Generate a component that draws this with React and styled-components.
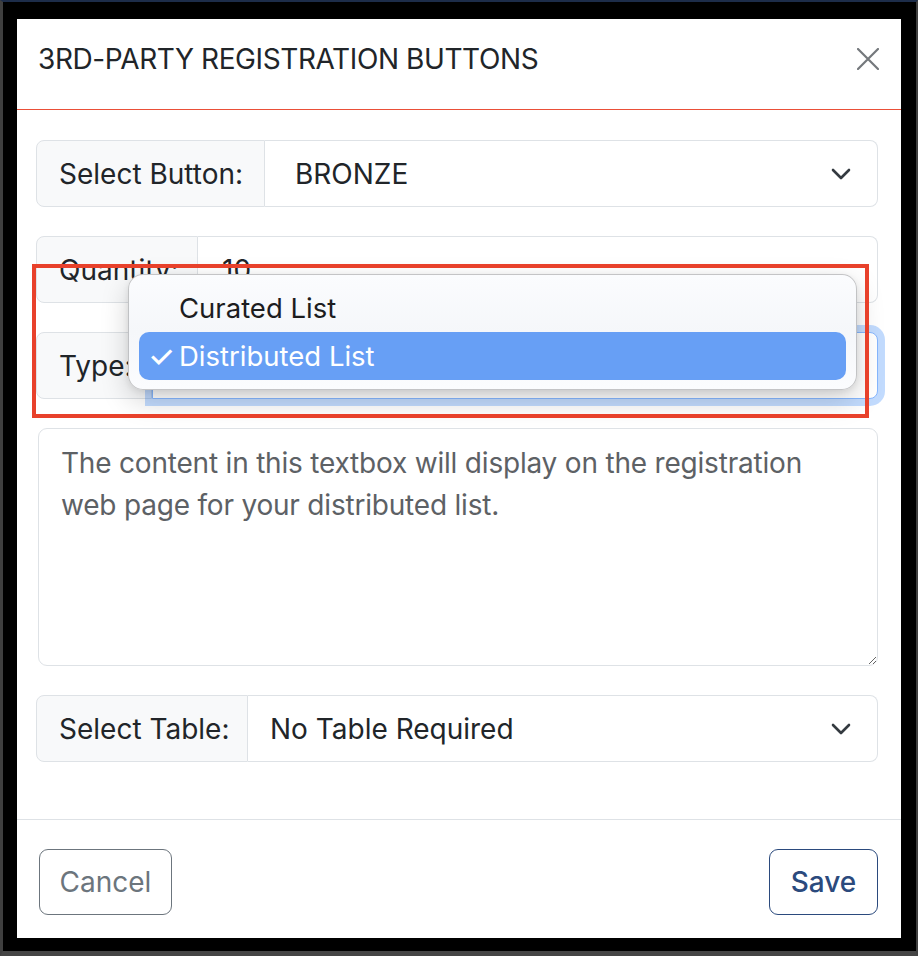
import React from "react";
import styled, { createGlobalStyle } from "styled-components";

const GlobalStyle = createGlobalStyle`
  * { box-sizing: border-box; }
  body {
    margin: 0;
    background: #000;
    font-family: Inter, "Noto Sans", "Liberation Sans", sans-serif;
  }
`;

const Frame = styled.div`
  position: relative;
  width: 918px;
  height: 956px;
  background: #000;
  border-top: 2px solid #1d2d4a;
  border-left: 3px solid #3f3f3f;
  border-right: 2px solid #3f3f3f;
  border-bottom: 5px solid #454545;
  padding: 17px 15px 13px 14px;
`;

const Modal = styled.div`
  width: 884px;
  height: 919px;
  background: #fff;
  display: flex;
  flex-direction: column;
`;

const Header = styled.div`
  display: flex;
  align-items: center;
  justify-content: space-between;
  height: 90px;
  padding: 0 22px 10px 21px;
`;

const RedRule = styled.div`
  height: 1px;
  background: #ea4f38;
`;

const Title = styled.h5`
  margin: 0;
  font-size: 28px;
  font-weight: 400;
  letter-spacing: -0.4px;
  line-height: 42px;
  color: #212529;
`;

const CloseButton = styled.button`
  border: none;
  background: none;
  padding: 0;
  width: 22px;
  height: 22px;
  display: flex;
  cursor: pointer;
`;

const Body = styled.div`
  flex: 1;
  display: flex;
  flex-direction: column;
  gap: 29px;
  padding: 30px 23px 0 19px;
`;

const Group = styled.div`
  display: flex;
  height: 67px;
  font-size: 28px;
  line-height: 42px;
  color: #212529;
`;

const Label = styled.div`
  flex: 0 0 ${(p) => p.$w}px;
  display: flex;
  align-items: center;
  padding-left: 22px;
  background: #f8f9fa;
  border: 1px solid #dee2e6;
  border-radius: 8px 0 0 8px;
  white-space: nowrap;
  overflow: hidden;
`;

const Field = styled.div`
  flex: 1;
  display: flex;
  align-items: center;
  justify-content: space-between;
  padding: 0 26px 0 ${(p) => p.$pad || 23}px;
  background: #fff;
  border: 1px solid ${(p) => (p.$focus ? "#86b7fe" : "#dee2e6")};
  border-left: ${(p) => (p.$focus ? "1px solid #86b7fe" : "none")};
  border-radius: 0 8px 8px 0;
  box-shadow: ${(p) => (p.$focus ? "0 0 0 7px rgba(13, 110, 253, 0.25)" : "none")};
  color: ${(p) => (p.$focus ? "#b8bcc2" : "#212529")};
`;

const TextArea = styled.textarea`
  height: 238px;
  margin-left: 2px;
  padding: 13px 22px;
  border: 1px solid #dee2e6;
  border-radius: 9px;
  font-family: inherit;
  font-size: 28px;
  letter-spacing: -0.2px;
  line-height: 42px;
  color: #212529;
  resize: vertical;
  outline: none;
  &::placeholder {
    color: #5d6165;
  }
`;

const Footer = styled.div`
  display: flex;
  justify-content: space-between;
  align-items: flex-start;
  height: 119px;
  padding: 29px 23px 0 22px;
  border-top: 1px solid #dee2e6;
`;

const Button = styled.button`
  height: 66px;
  width: ${(p) => p.$w}px;
  padding: 0;
  background: #fff;
  border: 1px solid ${(p) => p.$color};
  border-radius: 9px;
  font-family: inherit;
  font-size: 28px;
  font-weight: ${(p) => p.$weight || 400};
  color: ${(p) => p.$color};
  cursor: pointer;
`;

const Popup = styled.div`
  position: absolute;
  left: 125px;
  top: 272px;
  width: 729px;
  height: 116px;
  padding: 9px 10px;
  border: 1px solid rgba(0, 0, 0, 0.22);
  border-radius: 15px;
  background: linear-gradient(#fbfcfe, #f5f7fa 50%, #fbfcfe);
  box-shadow: 0 10px 28px rgba(0, 0, 0, 0.18), 0 2px 6px rgba(0, 0, 0, 0.08);
  font-size: 27.5px;
`;

const Option = styled.div`
  display: flex;
  align-items: center;
  height: 48px;
  padding-left: 9px;
  border-radius: 10px;
  background: ${(p) => (p.$active ? "#679ff5" : "transparent")};
  color: ${(p) => (p.$active ? "#fff" : "#1d1d1f")};
`;

const Check = styled.span`
  width: 31px;
  font-size: 30px;
  font-weight: 500;
`;

const Annotation = styled.div`
  position: absolute;
  left: 29px;
  top: 262px;
  width: 837px;
  height: 154px;
  border: 4.5px solid #e8412b;
  pointer-events: none;
`;

function Chevron() {
  return (
    <svg width="20" height="12" viewBox="0 0 20 12">
      <polyline
        points="2,2 10,10 18,2"
        fill="none"
        stroke="#343a40"
        strokeWidth="2.6"
        strokeLinecap="round"
        strokeLinejoin="round"
      />
    </svg>
  );
}

export default function App() {
  return (
    <>
      <GlobalStyle />
      <Frame>
        <Modal>
          <Header>
            <Title>3RD-PARTY REGISTRATION BUTTONS</Title>
            <CloseButton aria-label="Close">
              <svg width="22" height="22" viewBox="0 0 22 22">
                <path
                  d="M1 1 L21 21 M21 1 L1 21"
                  stroke="#74787c"
                  strokeWidth="2.2"
                  strokeLinecap="round"
                />
              </svg>
            </CloseButton>
          </Header>
          <RedRule />
          <Body>
            <Group>
              <Label $w={229}>Select Button:</Label>
              <Field $pad={30}>
                <span>BRONZE</span>
                <Chevron />
              </Field>
            </Group>
            <Group>
              <Label $w={162}>Quantity:</Label>
              <Field $pad={24}>
                <span>10</span>
              </Field>
            </Group>
            <Group>
              <Label $w={116}>Type:</Label>
              <Field $focus $pad={24}>
                <span>Distributed List</span>
                <Chevron />
              </Field>
            </Group>
            <TextArea placeholder="The content in this textbox will display on the registration web page for your distributed list." />
            <Group>
              <Label $w={212}>Select Table:</Label>
              <Field $pad={22}>
                <span>No Table Required</span>
                <Chevron />
              </Field>
            </Group>
          </Body>
          <Footer>
            <Button $w={133} $color="#6c757d">Cancel</Button>
            <Button $w={109} $color="#2b4a7d" $weight={500}>Save</Button>
          </Footer>
        </Modal>
        <Popup>
          <Option>
            <Check />
            Curated List
          </Option>
          <Option $active>
            <Check>✓</Check>
            Distributed List
          </Option>
        </Popup>
        <Annotation />
      </Frame>
    </>
  );
}
